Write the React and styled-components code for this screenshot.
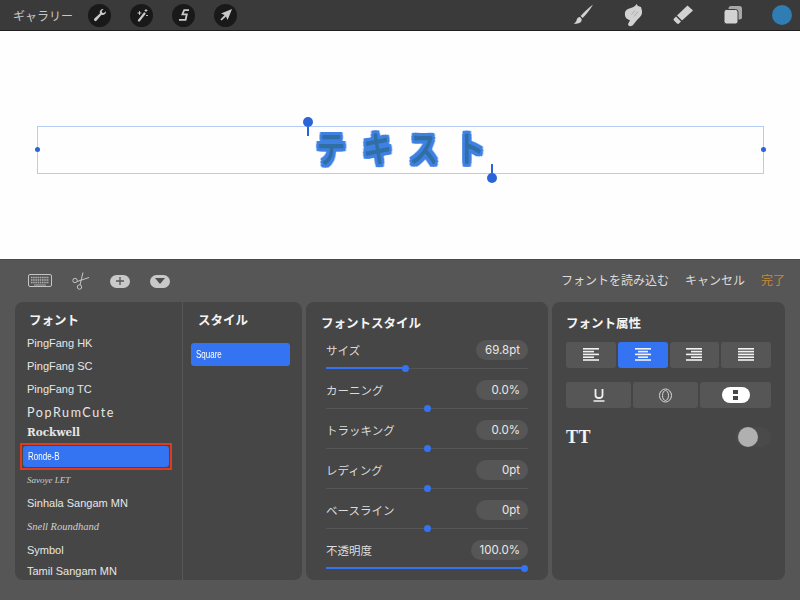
import React from 'react';
import styled, { createGlobalStyle } from 'styled-components';

const JP = `"Inter", "Noto Sans CJK JP", "Noto Sans", sans-serif`;

const Global = createGlobalStyle`
    html, body { margin: 0; padding: 0; }
    body { width: 800px; height: 600px; overflow: hidden; font-family: ${JP}; background: #565656; }
`;

const Page = styled.div`
    width: 800px;
    height: 600px;
    display: flex;
    flex-direction: column;
`;

const TopBar = styled.div`
    height: 30px;
    flex: none;
    background: #3a3a3a;
    border-bottom: 1px solid #1e1e1e;
    display: flex;
    align-items: center;
    position: relative;
`;
const Gallery = styled.span`
    color: #c8c8c8;
    font-size: 12px;
    margin-left: 13px;
    width: 75px;
    flex: none;
`;
const ToolGroup = styled.div`
    display: flex;
    gap: 19px;
`;
const RoundTool = styled.div`
    width: 23px;
    height: 23px;
    border-radius: 50%;
    background: #191919;
    display: flex;
    align-items: center;
    justify-content: center;
`;
const RightTools = styled.div`
    margin-left: auto;
    margin-right: 8px;
    display: flex;
    align-items: center;
`;
const RightTool = styled.div`
    width: 50px;
    display: flex;
    justify-content: center;
`;
const ColorDot = styled.div`
    width: 20px;
    height: 20px;
    border-radius: 50%;
    background: #2f7db3;
    margin-left: 14px;
`;

const Canvas = styled.div`
    height: 228px;
    flex: none;
    background: #fefefe;
    position: relative;
`;
const TextBox = styled.div`
    position: absolute;
    left: 37px;
    top: 95px;
    width: 725px;
    height: 46px;
    border: 1px solid #b5cdf5;
    display: flex;
    align-items: center;
    justify-content: center;
`;
const CanvasSvg = styled.svg`
    overflow: visible;
    width: 200px;
    height: 46px;
`;
const CanvasText = styled.text`
    font-family: "Noto Sans CJK JP", sans-serif;
    font-weight: 300;
    font-size: 35px;
    fill: #2f6fa3;
    stroke: #2f6fa3;
    stroke-width: 2.5px;
    stroke-linejoin: round;
    stroke-linecap: round;
    filter: drop-shadow(3px 0 0 #3f80e4) drop-shadow(-3px 0 0 #3f80e4) drop-shadow(0 3px 0 #3f80e4) drop-shadow(0 -3px 0 #3f80e4);
`;
const EdgeDot = styled.div`
    position: absolute;
    top: 20px;
    ${(p) => (p.$side === 'left' ? 'left: -3px;' : 'right: -3px;')}
    width: 5px;
    height: 5px;
    border-radius: 50%;
    background: #2a64d8;
`;
const Pin = styled.div`
    position: absolute;
    left: ${(p) => p.$x}px;
    top: ${(p) => p.$y}px;
    width: 10px;
    height: 19px;
    display: flex;
    flex-direction: ${(p) => (p.$up ? 'column' : 'column-reverse')};
    align-items: center;
    &::before {
        content: '';
        width: 10px;
        height: 10px;
        border-radius: 50%;
        background: #2a64d8;
        flex: none;
    }
    &::after {
        content: '';
        width: 2px;
        flex: 1;
        background: #2a64d8;
    }
`;

const Sheet = styled.div`
    flex: 1;
    background: #565656;
    border-top: 1px solid #4a4a4a;
    padding: 0 15px;
    display: flex;
    flex-direction: column;
`;
const SheetBar = styled.div`
    height: 42px;
    display: flex;
    align-items: center;
    flex: none;
    color: #dcdcdc;
    font-size: 12px;
`;
const BarIcons = styled.div`
    display: flex;
    align-items: center;
    margin-left: 13px;
    gap: 20px;
`;
const PillIcon = styled.div`
    width: 20px;
    height: 13px;
    border-radius: 7px;
    background: #c9c9c9;
    display: flex;
    align-items: center;
    justify-content: center;
`;
const BarLinks = styled.div`
    margin-left: auto;
    display: flex;
    gap: 16px;
    padding-bottom: 3px;
`;
const BarLink = styled.span`
    color: ${(p) => (p.$done ? '#c88a32' : '#dcdcdc')};
`;

const Panels = styled.div`
    display: flex;
    gap: 4px;
    height: 278px;
    flex: none;
`;
const Panel = styled.div`
    width: ${(p) => p.$w}px;
    flex: none;
    background: #464646;
    border-radius: 8px;
    overflow: hidden;
`;
const FontPanel = styled(Panel)`
    display: grid;
    grid-template-columns: 168px 1fr;
`;
const FontColumn = styled.div`
    border-right: 1px solid #575757;
    display: flex;
    flex-direction: column;
    overflow: hidden;
`;
const StyleColumn = styled.div`
    display: flex;
    flex-direction: column;
    padding: 0 12px 0 8px;
`;
const PanelTitle = styled.div`
    color: #f4f4f4;
    font-weight: 700;
    font-size: 12.5px;
    line-height: 18px;
    margin-left: ${(p) => p.$indent || 0}px;
    margin-top: ${(p) => p.$top || 10}px;
`;
const FontList = styled.div`
    margin-top: ${(p) => p.$top}px;
    display: flex;
    flex-direction: column;
`;
const FontRow = styled.div`
    height: ${(p) => p.$h || 23}px;
    line-height: ${(p) => p.$h || 23}px;
    flex: none;
    padding-left: 12px;
    color: #e6e6e6;
    font-size: 11px;
    white-space: nowrap;
    overflow: hidden;
    font-family: "Liberation Sans", "Inter", sans-serif;
`;
const CuteRow = styled(FontRow)`
    font-family: "Lato", sans-serif;
    font-size: 12.5px;
    letter-spacing: 1.6px;
`;
const SerifRow = styled(FontRow)`
    font-family: "DejaVu Serif", serif;
    font-weight: 700;
    font-size: 10.5px;
`;
const ScriptRow = styled(FontRow)`
    font-family: "Liberation Serif", serif;
    font-style: italic;
    font-size: ${(p) => p.$size}px;
    color: #cfcfcf;
`;
const SelectedWrap = styled.div`
    margin: 2px 10px 0 5px;
    border: 2px solid #df3b1c;
    padding: 1px;
    height: 27px;
    box-sizing: border-box;
    display: flex;
    flex: none;
`;
const BlueItem = styled.div`
    background: #3473f2;
    border-radius: 3px;
    color: #fff;
    font-size: 10px;
    line-height: ${(p) => p.$h}px;
    height: ${(p) => p.$h}px;
    padding-left: 5px;
    flex: ${(p) => (p.$block ? 'none' : 1)};
`;
const NarrowText = styled.span`
    display: inline-block;
    font-family: "Liberation Sans", sans-serif;
    transform: scaleX(0.8);
    transform-origin: left center;
`;

const SliderPanel = styled(Panel)`
    padding: 0 20px;
    box-sizing: border-box;
`;
const SliderList = styled.div`
    margin-top: 6px;
`;
const SliderItem = styled.div`
    height: 40px;
    box-sizing: border-box;
    padding-top: 1px;
`;
const SliderHead = styled.div`
    display: flex;
    justify-content: space-between;
    align-items: center;
    height: 20px;
    color: #dcdcdc;
    font-size: 11.5px;
`;
const ValuePill = styled.div`
    min-width: ${(p) => p.$w || 52}px;
    box-sizing: border-box;
    height: 20px;
    line-height: 20px;
    border-radius: 10px;
    background: #565656;
    color: #e8e8e8;
    text-align: right;
    padding-right: 8px;
    font-size: 11.5px;
`;
const Track = styled.div`
    position: relative;
    height: 1px;
    margin-top: 8px;
    background: #565656;
`;
const TrackFill = styled.div`
    position: absolute;
    left: 0;
    top: -1px;
    height: 2px;
    background: #3473f2;
`;
const Thumb = styled.div`
    position: absolute;
    top: -3px;
    width: 7px;
    height: 7px;
    margin-left: -3.5px;
    border-radius: 50%;
    background: #3473f2;
`;

const AttrPanel = styled(Panel)`
    padding: 0 14px;
    box-sizing: border-box;
`;
const ButtonRow = styled.div`
    display: grid;
    grid-template-columns: ${(p) => p.$cols};
    gap: 2px;
    margin-top: ${(p) => p.$top}px;
`;
const AttrButton = styled.div`
    height: 26px;
    border-radius: 3px;
    background: ${(p) => (p.$on ? '#3473f2' : '#565656')};
    display: flex;
    align-items: center;
    justify-content: center;
`;
const ToggleRow = styled.div`
    margin-top: 17px;
    display: flex;
    align-items: center;
    justify-content: space-between;
    height: 24px;
`;
const TTLabel = styled.span`
    font-family: "Liberation Serif", serif;
    font-weight: 700;
    font-size: 18px;
    color: #f2f2f2;
    letter-spacing: 0.5px;
`;
const Toggle = styled.div`
    width: 36px;
    height: 20px;
    border-radius: 10px;
    background: #4a4a4a;
    display: flex;
    padding-left: 3px;
    box-sizing: border-box;
`;
const ToggleKnob = styled.div`
    width: 20px;
    height: 20px;
    border-radius: 50%;
    background: #b0b0b0;
`;

const Wrench = () => (
    <svg width="14" height="14" viewBox="0 0 14 14">
        <path d="M13 3.2a3.4 3.4 0 0 1-4.5 3.6L3.6 12.6a1.4 1.4 0 0 1-2.2-2l5.5-5.1A3.4 3.4 0 0 1 10.6 1L8.7 3l.5 1.7 1.7.4z" fill="#c9c9c9" />
    </svg>
);
const Wand = () => (
    <svg width="14" height="14" viewBox="0 0 14 14" fill="none" stroke="#c9c9c9" strokeLinecap="round">
        <path d="M4 12.500 9.500 5.500" strokeWidth="2.200" />
        <path d="M4.500 3.500v3M3 5h3M11 1.500v2M10 2.500h2M11.500 7.500h1" strokeWidth="1" />
    </svg>
);
const Curve = () => (
    <svg width="14" height="14" viewBox="0 0 14 14" fill="none" stroke="#c9c9c9" strokeWidth="1.800">
        <path d="M12 2.200H7.200L5.400 6.400h4.400L8.600 11.800H2" />
    </svg>
);
const Arrow = () => (
    <svg width="14" height="14" viewBox="0 0 14 14">
        <path d="M13 1 8.600 12 7 8.400 2.600 12.600 1.400 11.400 5.600 7 2 5.400z" fill="#c9c9c9" />
    </svg>
);
const Brush = () => (
    <svg width="24" height="24" viewBox="0 0 24 24">
        <path d="M22 1.500c-4 3-9 7.600-12.400 11.500l2 1.900C15.500 11.200 19.500 6 22 1.500z" fill="#d2d2d2" />
        <path d="M8.500 14c-2 .3-2.600 2-3 3.500-.3 1.400-1.500 2.500-2.800 3 2.800.8 6.600.2 7.800-2.400.6-1.500-.4-3.800-2-4.100z" fill="#d2d2d2" />
    </svg>
);
const Smudge = () => (
    <svg width="24" height="26" viewBox="0 0 24 26">
        <path d="M15.500 2l1.500 2 3 1 1 4c.3 2.500-.5 4.500-2 6l-3 3-4 5c-1 1.300-3.500 1.500-4.500.5-.6-.8-.4-2 .3-3L9 18.500l-3.500-2C3.500 14 3.200 10 5.500 8c2.500-2.200 7.500-1.500 10-6z" fill="#d2d2d2" />
        <path d="M17 9.500 13 14.500M14 8.500l-3.500 4" stroke="#a0a0a0" strokeWidth=".8" fill="none" />
    </svg>
);
const Eraser = () => (
    <svg width="24" height="24" viewBox="0 0 24 24">
        <path d="M16.500 2.500 22 7.500 11 17.500 6 12.500z" fill="#d2d2d2" />
        <path d="M5 13.500 10 18.500 8 20.500c-.6.600-1.400.600-2 0L3 17.500c-.6-.6-.6-1.300 0-1.900z" fill="#d2d2d2" />
    </svg>
);
const Layers = () => (
    <svg width="20" height="20" viewBox="0 0 20 20">
        <rect x="5.500" y="1" width="13.500" height="13.500" rx="2.500" fill="#a8a8a8" />
        <rect x="1" y="4.500" width="14" height="14.500" rx="2.500" fill="#d2d2d2" stroke="#3a3a3a" strokeWidth="1" />
    </svg>
);
const Keyboard = () => (
    <svg width="24" height="14" viewBox="0 0 24 14" fill="none">
        <rect x="0.500" y="0.500" width="23" height="12" rx="1.500" stroke="#c4c4c4" />
        <path d="M3 3.500h18M3 6h18M3 8.500h18" stroke="#b0b0b0" strokeDasharray="1.500 .7" strokeWidth="1.300" />
        <path d="M6 11h12" stroke="#b0b0b0" />
    </svg>
);
const Scissors = () => (
    <svg width="18" height="18" viewBox="0 0 18 18" fill="none" stroke="#c4c4c4" strokeWidth="1">
        <circle cx="3" cy="8.500" r="2.200" />
        <circle cx="7.500" cy="15" r="2.200" />
        <path d="M5 9.500 17 5.500M8 13l3-12.500" />
    </svg>
);
const Plus = () => (
    <svg width="8" height="8" viewBox="0 0 8 8">
        <path d="M4 0v8M0 4h8" stroke="#555" strokeWidth="1.300" />
    </svg>
);
const Triangle = () => (
    <svg width="10" height="6" viewBox="0 0 10 6">
        <path d="M0 0h10L5 6z" fill="#4d4d4d" />
    </svg>
);
const AlignLines = ({ widths, align }) => (
    <svg width="16" height="16" viewBox="0 0 16 16">
        {widths.map((w, i) => {
            const x = align === 'left' ? 0 : align === 'right' ? 16 - w : (16 - w) / 2;
            return <rect key={i} x={x} y={1 + i * 2.8} width={w} height="1.600" fill="#f2f2f2" />;
        })}
    </svg>
);
const Underline = () => (
    <svg width="12" height="14" viewBox="0 0 12 14" fill="none" stroke="#f0f0f0">
        <path d="M2.500 1v6.200c0 2 1.400 2.800 3.500 2.800s3.500-.8 3.500-2.800V1" strokeWidth="1.800" />
        <path d="M0.500 13h11" strokeWidth="1.500" />
    </svg>
);
const Outline = () => (
    <svg width="15" height="15" viewBox="0 0 15 15" fill="none">
        <ellipse cx="7.500" cy="7.500" rx="6" ry="6.500" stroke="#d8d8d8" strokeWidth="1" />
        <ellipse cx="7.500" cy="7.500" rx="3" ry="5" stroke="#d8d8d8" strokeWidth="1" />
    </svg>
);
const Stencil = () => (
    <svg width="28" height="16" viewBox="0 0 28 16">
        <rect width="28" height="16" rx="8" fill="#fff" />
        <rect x="11" y="3" width="5" height="4" fill="#464646" />
        <rect x="11" y="9" width="5" height="4" fill="#464646" />
    </svg>
);

const sliders = [
    { label: 'サイズ', value: '69.8pt', pos: 39.5, fill: true },
    { label: 'カーニング', value: '0.0%', pos: 50 },
    { label: 'トラッキング', value: '0.0%', pos: 50 },
    { label: 'レディング', value: '0pt', pos: 50 },
    { label: 'ベースライン', value: '0pt', pos: 50 },
    { label: '不透明度', value: '100.0%', pos: 98.5, fill: true, w: 57 },
];

const App = () => {
    return (
        <Page>
            <Global />
            <TopBar>
                <Gallery>ギャラリー</Gallery>
                <ToolGroup>
                    <RoundTool><Wrench /></RoundTool>
                    <RoundTool><Wand /></RoundTool>
                    <RoundTool><Curve /></RoundTool>
                    <RoundTool><Arrow /></RoundTool>
                </ToolGroup>
                <RightTools>
                    <RightTool><Brush /></RightTool>
                    <RightTool><Smudge /></RightTool>
                    <RightTool><Eraser /></RightTool>
                    <RightTool><Layers /></RightTool>
                    <ColorDot />
                </RightTools>
            </TopBar>
            <Canvas>
                <TextBox>
                    <EdgeDot $side="left" />
                    <EdgeDot $side="right" />
                    <CanvasSvg viewBox="0 0 200 46">
                        <CanvasText x="20 78 136 194" y="35" transform="scale(0.8 1)">テキスト</CanvasText>
                    </CanvasSvg>
                </TextBox>
                <Pin $up $x={303} $y={86} />
                <Pin $x={487} $y={133} />
            </Canvas>
            <Sheet>
                <SheetBar>
                    <BarIcons>
                        <Keyboard />
                        <Scissors />
                        <PillIcon><Plus /></PillIcon>
                        <PillIcon><Triangle /></PillIcon>
                    </BarIcons>
                    <BarLinks>
                        <BarLink>フォントを読み込む</BarLink>
                        <BarLink>キャンセル</BarLink>
                        <BarLink $done>完了</BarLink>
                    </BarLinks>
                </SheetBar>
                <Panels>
                    <FontPanel $w={287}>
                        <FontColumn>
                            <PanelTitle $indent={14}>フォント</PanelTitle>
                            <FontList $top={2}>
                                <FontRow>PingFang HK</FontRow>
                                <FontRow>PingFang SC</FontRow>
                                <FontRow>PingFang TC</FontRow>
                                <CuteRow>PopRumCute</CuteRow>
                                <SerifRow $h={17}>Rockwell</SerifRow>
                                <SelectedWrap><BlueItem $h={21}><NarrowText>Ronde-B</NarrowText></BlueItem></SelectedWrap>
                                <ScriptRow $h={20} $size={9}>Savoye LET</ScriptRow>
                                <FontRow $h={27}>Sinhala Sangam MN</FontRow>
                                <ScriptRow $h={19} $size={10.5}>Snell Roundhand</ScriptRow>
                                <FontRow $h={28}>Symbol</FontRow>
                                <FontRow $h={15}>Tamil Sangam MN</FontRow>
                            </FontList>
                        </FontColumn>
                        <StyleColumn>
                            <PanelTitle $indent={7}>スタイル</PanelTitle>
                            <FontList $top={13}>
                                <BlueItem $block $h={23}><NarrowText>Square</NarrowText></BlueItem>
                            </FontList>
                        </StyleColumn>
                    </FontPanel>
                    <SliderPanel $w={242}>
                        <PanelTitle $indent={-5} $top={13}>フォントスタイル</PanelTitle>
                        <SliderList>
                            {sliders.map((s) => (
                                <SliderItem key={s.label}>
                                    <SliderHead>
                                        <span>{s.label}</span>
                                        <ValuePill $w={s.w}>{s.value}</ValuePill>
                                    </SliderHead>
                                    <Track>
                                        {s.fill && <TrackFill style={{ width: `${s.pos}%` }} />}
                                        <Thumb style={{ left: `${s.pos}%` }} />
                                    </Track>
                                </SliderItem>
                            ))}
                        </SliderList>
                    </SliderPanel>
                    <AttrPanel $w={233}>
                        <PanelTitle $top={13}>フォント属性</PanelTitle>
                        <ButtonRow $cols="1fr 1fr 1fr 1fr" $top={9}>
                            <AttrButton><AlignLines align="left" widths={[16, 11, 16, 11, 16]} /></AttrButton>
                            <AttrButton $on><AlignLines align="center" widths={[16, 10, 16, 10, 16]} /></AttrButton>
                            <AttrButton><AlignLines align="right" widths={[16, 11, 16, 11, 16]} /></AttrButton>
                            <AttrButton><AlignLines align="left" widths={[16, 16, 16, 16, 16]} /></AttrButton>
                        </ButtonRow>
                        <ButtonRow $cols="65px 65px 1fr" $top={14}>
                            <AttrButton><Underline /></AttrButton>
                            <AttrButton><Outline /></AttrButton>
                            <AttrButton><Stencil /></AttrButton>
                        </ButtonRow>
                        <ToggleRow>
                            <TTLabel>TT</TTLabel>
                            <Toggle><ToggleKnob /></Toggle>
                        </ToggleRow>
                    </AttrPanel>
                </Panels>
            </Sheet>
        </Page>
    );
};

export default App;
